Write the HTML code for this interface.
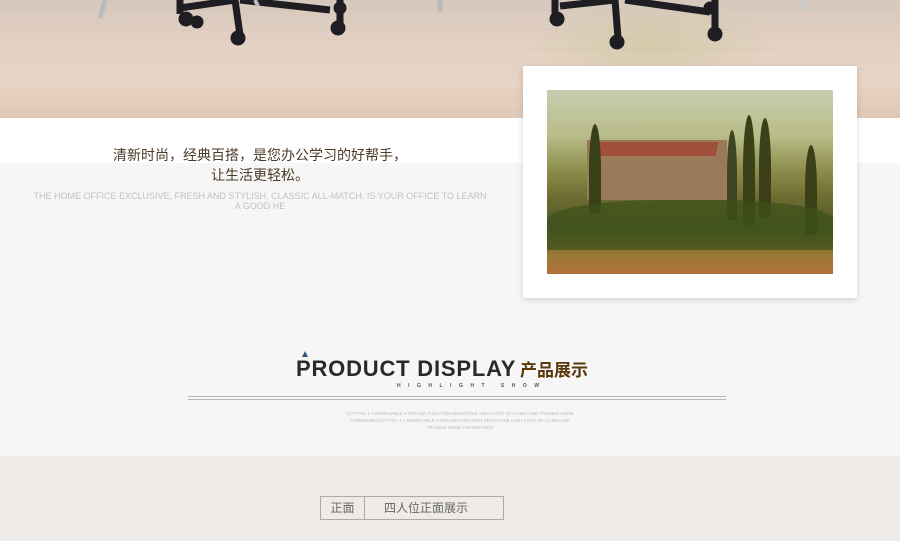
<!DOCTYPE html>
<html><head><meta charset="utf-8"><style>
*{margin:0;padding:0;box-sizing:border-box}
body{width:900px;height:541px;overflow:hidden;position:relative;font-family:"Liberation Sans","Noto Sans CJK SC",sans-serif;background:#f6f6f6}
.abs{position:absolute}
</style></head><body>
<div class="abs" style="left:0;top:0;width:900px;height:118px;background:linear-gradient(180deg,#d6c8bc 0%,#e4d2c4 40%,#e8d4c4 70%,#dfc8b6 100%)"></div>
<div class="abs" style="left:520px;top:0;width:260px;height:90px;background:radial-gradient(ellipse at center,rgba(205,200,160,.7),rgba(205,200,160,0) 70%)"></div>
<div class="abs" style="left:0;top:0;width:900px;height:118px;background:repeating-linear-gradient(180deg,rgba(255,255,255,0) 0 9px,rgba(200,160,140,.12) 9px 10px)"></div>
<svg class="abs" style="left:0;top:0" width="900" height="118">
<g fill="#1d1d22" stroke="#1d1d22">
<path d="M105 0 L100 18" stroke="#bbb" stroke-width="5"/>
<path d="M180 0 L180 14 M180 8 L235 0 M235 0 L240 35 M240 0 L330 10 M340 0 L340 25" stroke-width="7" fill="none"/>
<circle cx="186" cy="19" r="7"/><circle cx="238" cy="38" r="7"/><circle cx="197" cy="22" r="6"/><circle cx="338" cy="28" r="7"/><circle cx="340" cy="8" r="6"/>
<path d="M255 0 L258 6" stroke="#bbb" stroke-width="4"/>
<path d="M440 0 L440 12" stroke="#bbb" stroke-width="5"/>
<path d="M555 0 L555 14 M560 6 L615 0 M615 0 L618 38 M625 0 L710 12 M715 0 L715 30" stroke-width="7" fill="none"/>
<circle cx="557" cy="19" r="7"/><circle cx="617" cy="42" r="7"/><circle cx="715" cy="34" r="7"/><circle cx="710" cy="8" r="6"/>
<path d="M800 0 L808 12" stroke="#ccc" stroke-width="5"/>
</g></svg>
<div class="abs" style="left:0;top:118px;width:900px;height:45px;background:#fff"></div>
<div class="abs" style="left:0;top:456px;width:900px;height:85px;background:#eeeae7"></div>

<div class="abs" style="left:523px;top:66px;width:334px;height:232px;background:#fff;box-shadow:0 2px 6px rgba(0,0,0,.15)"></div>
<div class="abs" style="left:547px;top:90px;width:286px;height:184px;overflow:hidden;background:linear-gradient(180deg,#c9cdb0 0%,#b8bc88 25%,#8a8a48 45%,#6a6a30 60%,#4f5a25 75%,#9a7a35 90%,#b0703a 100%)">
<div class="abs" style="left:40px;top:50px;width:140px;height:60px;background:#9a7a5a"></div>
<div class="abs" style="left:52px;top:52px;width:118px;height:14px;background:#a0503a;transform:skewX(-10deg)"></div>
<div class="abs" style="left:42px;top:34px;width:12px;height:90px;background:#3a4018;border-radius:50% 50% 10% 10%"></div>
<div class="abs" style="left:196px;top:25px;width:12px;height:110px;background:#3a4018;border-radius:50% 50% 10% 10%"></div>
<div class="abs" style="left:212px;top:28px;width:12px;height:100px;background:#3a4018;border-radius:50% 50% 10% 10%"></div>
<div class="abs" style="left:258px;top:55px;width:12px;height:90px;background:#3a4018;border-radius:50% 50% 10% 10%"></div>
<div class="abs" style="left:180px;top:40px;width:10px;height:90px;background:#3e4520;border-radius:50% 50% 10% 10%"></div>
<div class="abs" style="left:0;top:110px;width:286px;height:50px;background:rgba(60,80,25,.7);border-radius:40% 40% 0 0"></div>
</div>

<div class="abs" style="left:0;top:145px;width:520px;text-align:center;color:#4a3a26;font-size:14px;line-height:20px">清新时尚，经典百搭，是您办公学习的好帮手，<br>让生活更轻松。</div>
<div class="abs" style="left:30px;top:191px;width:460px;text-align:center;color:#c2c2c2;font-size:9px;line-height:10px">THE HOME OFFICE EXCLUSIVE, FRESH AND STYLISH, CLASSIC ALL-MATCH, IS YOUR OFFICE TO LEARN A GOOD HE</div>

<div class="abs" style="left:302px;top:351px;width:0;height:0;border-left:3.5px solid transparent;border-right:3.5px solid transparent;border-bottom:6px solid #2c5a85"></div>
<div class="abs" style="left:296px;top:356px;font-size:22px;font-weight:bold;color:#2a2a2a;letter-spacing:0.8px;white-space:nowrap">PRODUCT DISPLAY</div>
<div class="abs" style="left:520px;top:356px;font-size:17px;font-weight:bold;color:#5a380c;white-space:nowrap">产品展示</div>
<div class="abs" style="left:397px;top:383px;font-size:5px;font-weight:bold;letter-spacing:7.5px;color:#555;white-space:nowrap">HIGHLIGHT&nbsp;SHOW</div>
<div class="abs" style="left:188px;top:396px;width:538px;height:1px;background:#b5b5b5"></div>
<div class="abs" style="left:188px;top:399px;width:538px;height:1px;background:#b5b5b5"></div>
<div class="abs" style="left:340px;top:410px;width:240px;text-align:center;font-size:4.5px;line-height:7px;color:#bbb">COTTON ＋＋REMOVABLE STORAGE FUNCTION DESIGNTHE HIGH COST OF LIVING AND TRAINED HOME FURNISHINGCOTTON ＋＋REMOVABLE STORAGE FUNCTION DESIGNTHE HIGH COST OF LIVING AND TRAINED HOME FURNISHINGS</div>

<div class="abs" style="left:320px;top:496px;width:184px;height:24px;border:1px solid #aaa;font-size:12px;color:#666">
<div class="abs" style="left:0;top:0;width:44px;height:22px;border-right:1px solid #aaa;text-align:center;line-height:22px">正面</div>
<div class="abs" style="left:63px;top:0;line-height:22px">四人位正面展示</div>
</div>
</body></html>
